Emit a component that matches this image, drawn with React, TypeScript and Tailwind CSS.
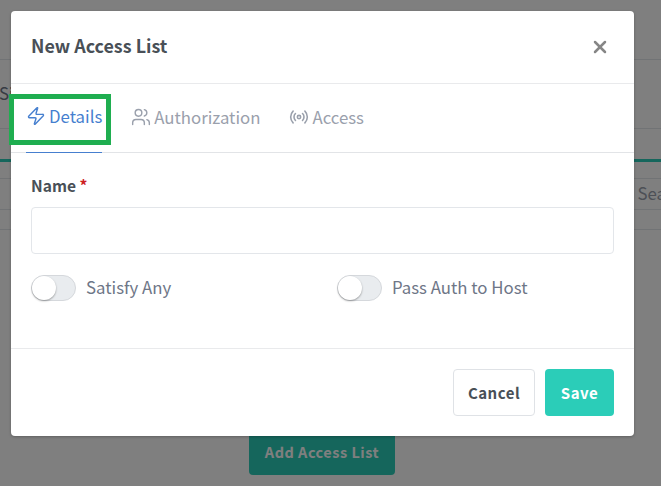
import { Radio, Users, X, Zap } from 'lucide-react'

function Toggle({ label }: { label: string }) {
  return (
    <label className="flex items-center gap-[10px]">
      <span className="relative block h-[26px] w-[45px] rounded-full border border-[#d5d8dc] bg-[#e9ecef]">
        <span className="absolute left-0 top-0 h-[24px] w-[24px] rounded-full bg-white shadow-[0_1px_2px_rgba(0,0,0,0.35)]" />
      </span>
      <span className="pb-[2px] text-[16.8px] leading-[26px] text-[#6e7687]">{label}</span>
    </label>
  )
}

function Tab({ icon, label, active }: { icon: React.ReactNode; label: string; active?: boolean }) {
  return (
    <div
      className={
        active
          ? 'flex h-[69px] items-center gap-[3px] border-b border-[#467fcf] pb-[4px] text-[#467fcf] -mb-px'
          : 'flex h-[69px] items-center gap-[3px] pb-[4px] text-[#9aa0ac]'
      }
    >
      {icon}
      <span className="text-[16.8px] leading-[26px]">{label}</span>
    </div>
  )
}

export default function App() {
  return (
    <div className="relative h-[486px] w-[661px] overflow-hidden bg-white font-['Noto_Sans_CJK_SC','Source_Sans_Pro',sans-serif]">
      {/* page behind the modal */}
      <div className="flex h-full flex-col">
        <div className="h-[60px] border-b border-[#e3e6ea]" />
        <div className="flex h-[69px] items-center border-b border-[#e3e6ea] text-[16.8px] text-[#6e7687]">
          <span className="-ml-px">Si</span>
        </div>
        <div className="mt-[30px] h-[3px] bg-[#2bcdb8]" />
        <div className="flex h-[17px] border-b border-[#e3e6ea]" />
        <div className="flex h-[31px] items-center justify-end border-b border-[#e3e6ea] text-[16.8px] text-[#9aa0ac]">
          <span className="-mr-[5px]">Sea</span>
        </div>
        <div className="h-[20px] border-b border-[#e3e6ea]" />
        <div className="flex flex-1 justify-center pr-[17px] pt-[198px]">
          <div className="flex h-[47px] w-[146px] items-center justify-center rounded-[4px] bg-[#2bcdb8] text-[14.5px] font-bold tracking-[0.5px] text-white">
            Add Access List
          </div>
        </div>
      </div>
      <div className="absolute inset-0 bg-black/50" />

      {/* modal */}
      <div className="absolute left-[11px] top-[11px] flex h-[425px] w-[623px] flex-col rounded-[4px] bg-white shadow-[0_1px_3px_rgba(0,0,0,0.25)]">
        <div className="flex h-[73px] items-center justify-between border-b border-[#e9eaec] pl-[20px] pr-[24px]">
          <h2 className="pb-[4px] text-[17.9px] font-bold leading-[26px] text-[#495057]">New Access List</h2>
          <X className="h-[20px] w-[20px] text-[#868686]" strokeWidth={3} />
        </div>
        <div className="flex h-[69px] gap-[29px] border-b border-[#e2e4e7] pl-[15px]">
          <Tab active icon={<Zap className="h-[20px] w-[20px]" strokeWidth={1.7} />} label="Details" />
          <Tab icon={<Users className="h-[20px] w-[20px]" strokeWidth={1.7} />} label="Authorization" />
          <Tab icon={<Radio className="h-[20px] w-[20px]" strokeWidth={1.9} />} label="Access" />
        </div>
        <div className="flex flex-1 flex-col px-[20px] pt-[19px]">
          <div className="text-[15.6px] font-bold leading-[26px] text-[#495057]">
            Name <span className="text-[#cd201f]">*</span>
          </div>
          <input className="mt-[9px] h-[47px] w-full rounded-[4px] border border-[#e3e6ea] bg-white" />
          <div className="mt-[20px] grid grid-cols-2 gap-[29px]">
            <Toggle label="Satisfy Any" />
            <Toggle label="Pass Auth to Host" />
          </div>
        </div>
        <div className="flex h-[88px] items-center justify-end gap-[10px] border-t border-[#e9eaec] pr-[20px]">
          <button className="h-[47px] w-[82px] rounded-[4px] border border-[#dfe2e6] bg-white pt-[2px] text-[15px] font-bold tracking-[0.5px] text-[#495057]">
            Cancel
          </button>
          <button className="h-[47px] w-[69px] rounded-[4px] bg-[#2bcdb8] pt-[2px] text-[15px] font-bold tracking-[0.5px] text-white">
            Save
          </button>
        </div>
      </div>

      {/* highlight around the tab */}
      <div className="absolute left-[9px] top-[94px] h-[51px] w-[102px] border-[5px] border-[#1fae50]" />
    </div>
  )
}
